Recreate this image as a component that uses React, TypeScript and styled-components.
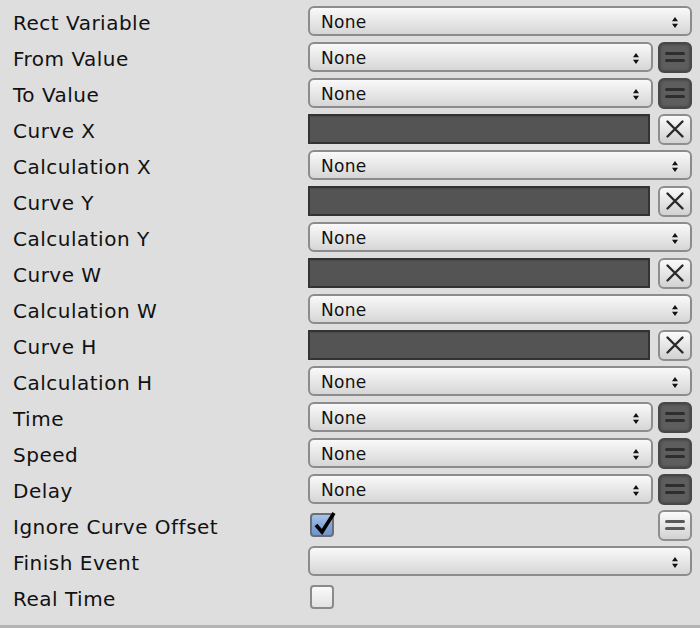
import React from "react";
import styled, { createGlobalStyle, css } from "styled-components";

const Global = createGlobalStyle`
  html, body { margin: 0; padding: 0; background: #dedede; }
  #root { width: 700px; height: 628px; }
`;

const Panel = styled.div`
  box-sizing: border-box;
  width: 700px;
  height: 628px;
  padding-top: 3px;
  background: #dedede;
  border-bottom: 3px solid #b4b4b4;
  font-family: "DejaVu Sans", "Noto Sans", sans-serif;
  color: #111;
  display: flex;
  flex-direction: column;
`;

const Row = styled.div`
  height: 36px;
  display: grid;
  grid-template-columns: 308px 384px;
  align-items: center;
`;

const Label = styled.div`
  padding-left: 13px;
  padding-top: 3px;
  font-size: 20px;
  letter-spacing: 0.5px;
  white-space: nowrap;
`;

const Controls = styled.div`
  display: flex;
  align-items: center;
  gap: 5px;
`;

const Select = styled.div`
  box-sizing: border-box;
  flex: 1;
  height: 30px;
  border: 2px solid #8c8c8c;
  border-radius: 6px;
  background: linear-gradient(#f9f9f9, #e6e6e6 55%, #d6d6d6);
  display: flex;
  align-items: center;
  padding: 2px 12px 0 11px;
  font-size: 17px;
  letter-spacing: 0.3px;
  color: #111;
`;

const SelectText = styled.span`
  flex: 1;
`;

const CurveField = styled.div`
  box-sizing: border-box;
  width: 343px;
  height: 30px;
  background: #545454;
  border: 2px solid #333;
  box-shadow: inset 0 1px 0 #4a4a4a;
`;

const SideButton = styled.div<{ $dark?: boolean }>`
  box-sizing: border-box;
  width: 34px;
  height: 31px;
  border-radius: 6px;
  display: flex;
  align-items: center;
  justify-content: center;
  ${(p) =>
    p.$dark
      ? css`
          background: #5e5e5e;
          border: 2px solid #484848;
          box-shadow: inset 0 0 3px #3a3a3a;
        `
      : css`
          background: linear-gradient(#fbfbfb, #e4e4e4 55%, #d2d2d2);
          border: 2px solid #8e8e8e;
        `}
`;

const XButton = styled(SideButton)`
  margin-left: 3px;
`;

const Spacer = styled.div`
  flex: 1;
`;

const Checkbox = styled.div<{ $checked?: boolean }>`
  position: relative;
  box-sizing: border-box;
  width: 24px;
  height: 24px;
  margin-left: 2px;
  border-radius: 4px;
  border: 2px solid ${(p) => (p.$checked ? "#6b6e76" : "#8a8a8a")};
  background: ${(p) =>
    p.$checked
      ? "linear-gradient(#a9c3e8, #7fa2d6 60%, #6f94cc)"
      : "linear-gradient(#fafafa, #e2e2e2)"};
`;

const CheckMark = styled.svg`
  position: absolute;
  left: 1px;
  top: -5px;
`;

const Arrows = () => (
  <svg width="6" height="11" viewBox="0 0 6 11">
    <path d="M3 0 L6 4.3 L0 4.3 Z M3 11 L6 6.7 L0 6.7 Z" fill="#111" />
  </svg>
);

const EqualIcon = ({ dark }: { dark?: boolean }) => (
  <svg width="22" height="12" viewBox="0 0 22 12">
    <rect x="1" y="1" width="20" height="3" rx="1.5" fill={dark ? "#2e2e2e" : "#5a5a5a"} />
    <rect x="1" y="8" width="20" height="3" rx="1.5" fill={dark ? "#2e2e2e" : "#5a5a5a"} />
  </svg>
);

const XIcon = () => (
  <svg width="20" height="20" viewBox="0 0 20 20">
    <path d="M2.5 2.5 L17.5 17.5 M17.5 2.5 L2.5 17.5" stroke="#2a2a2a" strokeWidth="2.4" strokeLinecap="round" />
  </svg>
);

type Kind = "select" | "selectEq" | "curve" | "check" | "empty" | "box";

const rows: { label: string; kind: Kind }[] = [
  { label: "Rect Variable", kind: "select" },
  { label: "From Value", kind: "selectEq" },
  { label: "To Value", kind: "selectEq" },
  { label: "Curve X", kind: "curve" },
  { label: "Calculation X", kind: "select" },
  { label: "Curve Y", kind: "curve" },
  { label: "Calculation Y", kind: "select" },
  { label: "Curve W", kind: "curve" },
  { label: "Calculation W", kind: "select" },
  { label: "Curve H", kind: "curve" },
  { label: "Calculation H", kind: "select" },
  { label: "Time", kind: "selectEq" },
  { label: "Speed", kind: "selectEq" },
  { label: "Delay", kind: "selectEq" },
  { label: "Ignore Curve Offset", kind: "check" },
  { label: "Finish Event", kind: "empty" },
  { label: "Real Time", kind: "box" },
];

const Field = ({ kind }: { kind: Kind }) => {
  switch (kind) {
    case "select":
      return (
        <Select>
          <SelectText>None</SelectText>
          <Arrows />
        </Select>
      );
    case "empty":
      return (
        <Select>
          <SelectText />
          <Arrows />
        </Select>
      );
    case "selectEq":
      return (
        <>
          <Select>
            <SelectText>None</SelectText>
            <Arrows />
          </Select>
          <SideButton $dark>
            <EqualIcon dark />
          </SideButton>
        </>
      );
    case "curve":
      return (
        <>
          <CurveField />
          <XButton>
            <XIcon />
          </XButton>
        </>
      );
    case "check":
      return (
        <>
          <Checkbox $checked>
            <CheckMark width="24" height="26" viewBox="0 0 24 26">
              <path d="M3 15 L9 22 L21 3" fill="none" stroke="#000" strokeWidth="3.6" strokeLinejoin="miter" />
            </CheckMark>
          </Checkbox>
          <Spacer />
          <SideButton>
            <EqualIcon />
          </SideButton>
        </>
      );
    case "box":
      return <Checkbox />;
  }
};

export default function App() {
  return (
    <>
      <Global />
      <Panel>
        {rows.map((r) => (
          <Row key={r.label}>
            <Label>{r.label}</Label>
            <Controls>
              <Field kind={r.kind} />
            </Controls>
          </Row>
        ))}
      </Panel>
    </>
  );
}
